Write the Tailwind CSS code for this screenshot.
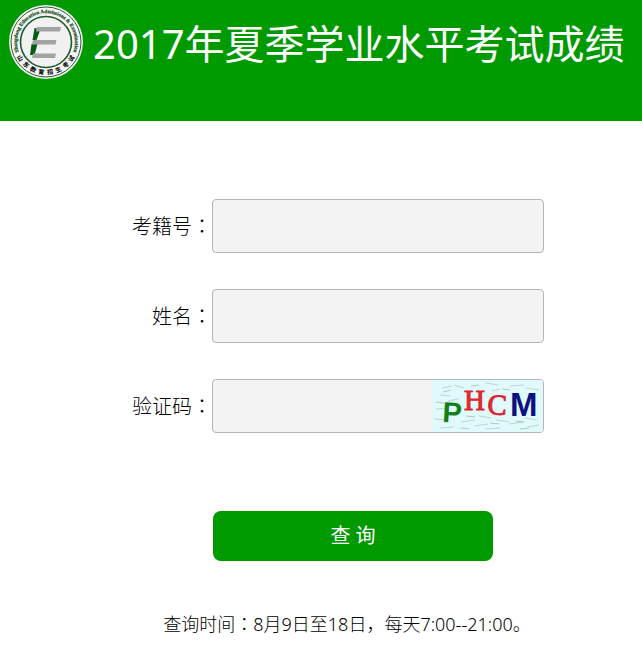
<!DOCTYPE html>
<html lang="zh-CN">
<head>
<meta charset="utf-8">
<meta name="viewport" content="width=device-width, initial-scale=1">
<title>2017年夏季学业水平考试成绩</title>
<script src="https://cdn.jsdelivr.net/npm/@tailwindcss/browser@4"></script>
</head>
<body class="bg-white text-black font-['Noto_Sans','Noto_Sans_CJK_SC',sans-serif]">
<header class="flex h-[121px] items-start bg-[#009900] pl-2 pt-1">
  <svg class="h-[76px] w-[76px] shrink-0" viewBox="0 0 76 76" role="img" aria-label="山东教育招生考试">
    <defs>
      <path id="ringTop" d="M15.400 56.300A29 29 0 1 1 60.600 56.300"/>
    </defs>
    <circle cx="38" cy="38" r="37" fill="#f3f5f3"/>
    <circle cx="38" cy="38" r="35" fill="none" stroke="#2f5a38" stroke-width="1"/>
    <circle cx="38" cy="38" r="25.5" fill="#f1f1f1" stroke="#1d5a2b" stroke-width="1.6"/>
    <text class="font-['Liberation_Serif',serif]" font-size="5.2" font-weight="700" fill="#174b22" stroke="#174b22" stroke-width="0.2"><textPath href="#ringTop" startOffset="50%" text-anchor="middle">Shangdong Education Admissions &amp; Examination</textPath></text>
    <g class="font-['Noto_Sans_CJK_SC',sans-serif]" font-size="6" font-weight="900" fill="#111" text-anchor="middle">
      <text transform="rotate(58 38 38) translate(38 70.500)">山</text>
      <text transform="rotate(41 38 38) translate(38 70.500)">东</text>
      <text transform="rotate(25 38 38) translate(38 70.500)">教</text>
      <text transform="rotate(9 38 38) translate(38 70.500)">育</text>
      <text transform="rotate(-8 38 38) translate(38 70.500)">招</text>
      <text transform="rotate(-24 38 38) translate(38 70.500)">生</text>
      <text transform="rotate(-41 38 38) translate(38 70.500)">考</text>
      <text transform="rotate(-57 38 38) translate(38 70.500)">试</text>
    </g>
    <path fill="#075c16" d="M26.500 24l5 1v3l-3 8h-4zM23.500 40h6l-3 11h-4.500z"/>
    <path fill="#a3a3a3" d="M29 23h24l-1 4.500H28zM25 36h23.500l-1 4.500H24zM25 49.500h23l-1 4.500H24z"/>
  </svg>
  <h1 class="ml-[9px] mt-3 whitespace-nowrap text-[40px] leading-14 text-white">2017年夏季学业水平考试成绩</h1>
</header>

<main class="pt-[78px] text-xl">
  <form>
    <div class="flex flex-col gap-9 pr-[98px]">
      <div class="flex items-center">
        <label for="exam-id" class="w-[212px] shrink-0 text-right font-light">考籍号<span lang="zh-TW" class="font-['Noto_Sans_CJK_TC']">：</span></label>
        <input id="exam-id" type="text" class="h-[54px] min-w-0 flex-1 rounded border border-[#b5b5b5] bg-[#f3f3f3] px-3">
      </div>
      <div class="flex items-center">
        <label for="name" class="w-[212px] shrink-0 text-right font-light">姓名<span lang="zh-TW" class="font-['Noto_Sans_CJK_TC']">：</span></label>
        <input id="name" type="text" class="h-[54px] min-w-0 flex-1 rounded border border-[#b5b5b5] bg-[#f3f3f3] px-3">
      </div>
      <div class="flex items-center">
        <label for="captcha" class="w-[212px] shrink-0 text-right font-light">验证码<span lang="zh-TW" class="font-['Noto_Sans_CJK_TC']">：</span></label>
        <div class="flex h-[54px] min-w-0 flex-1 overflow-hidden rounded border border-[#b5b5b5] bg-[#f3f3f3]">
          <input id="captcha" type="text" class="min-w-0 flex-1 px-3">
          <svg class="h-[52px] w-[111px] shrink-0" viewBox="0 0 111 52" role="img" aria-label="验证码">
            <rect width="111" height="52" fill="#e0fafb"/>
            <g fill="none" stroke="#c3d3d5" stroke-width="1.2">
              <path d="M10 8l10-2M22 5l10 3M54 3l12 2M78 6l14-1M94 8l13 2M8 15l10 1M16 21l10-2M60 11l8-2M4 29l12-1M47 36l12 2M93 38l12 2M2 39l12 1M29 42l14-2M42 46l14-2M64 40l14 2M77 44l14-2M95 47l12-2M8 48l14-1M54 49l14-1"/>
            </g>
            <g fill="none" stroke="#a9cbc3" stroke-width="1">
              <path d="M11 12l8-2M39 6l8-1M70 9l8 1M4 22l8 1M34 36l9 1M58 43l9 1M84 41l8 1M88 49l9-1M29 48l8 1"/>
            </g>
            <text class="font-['Liberation_Sans',sans-serif]" font-size="29" font-weight="700" fill="#128018" transform="translate(10 42) rotate(3)">P</text>
            <g class="font-['Liberation_Serif',serif]" font-size="29" fill="#dc2830" stroke="#dc2830" stroke-width="1">
              <text x="32" y="30">H</text>
              <text transform="translate(55 34) rotate(3)">C</text>
            </g>
            <text class="font-['Liberation_Sans',sans-serif]" x="78" y="36" font-size="33" font-weight="700" fill="#0b1280">M</text>
          </svg>
        </div>
      </div>
    </div>
    <div class="mt-[78px] flex justify-center pl-16">
      <button type="submit" class="h-[50px] w-[280px] rounded-lg bg-[#009900] text-white">查 询</button>
    </div>
  </form>
  <p class="mt-12 pl-[52px] text-center text-lg font-light">查询时间<span lang="zh-TW" class="font-['Noto_Sans_CJK_TC']">：</span>8月9日至18日，每天7:00--21:00。</p>
</main>
</body>
</html>
